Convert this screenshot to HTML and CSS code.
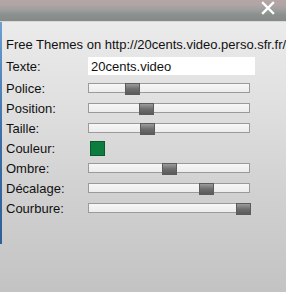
FILE: index.html
```html
<!DOCTYPE html>
<html>
<head>
  <title>Free Themes</title>
  <link rel="stylesheet" href="styles.css">
</head>
<body>
  <div class="titlebar">
    <svg class="close" width="14" height="14" viewBox="0 0 14 14">
      <path d="M2 2 L12 12 M12 2 L2 12" stroke="#fff" stroke-width="2.4" stroke-linecap="square"/>
    </svg>
  </div>
  <div class="panel">
    <div class="edge"></div>
    <div class="content">
      <div class="heading">Free Themes on http://20cents.video.perso.sfr.fr/</div>
      <div class="row row-text">
        <label>Texte:</label>
        <input class="text-input" type="text" value="20cents.video">
      </div>
      <div class="row">
        <label>Police:</label>
        <div class="track"><div class="thumb" style="left: 36px"></div></div>
      </div>
      <div class="row">
        <label>Position:</label>
        <div class="track"><div class="thumb" style="left: 50px"></div></div>
      </div>
      <div class="row">
        <label>Taille:</label>
        <div class="track"><div class="thumb" style="left: 51px"></div></div>
      </div>
      <div class="row">
        <label>Couleur:</label>
        <div class="swatch"></div>
      </div>
      <div class="row">
        <label>Ombre:</label>
        <div class="track"><div class="thumb" style="left: 73px"></div></div>
      </div>
      <div class="row">
        <label>Décalage:</label>
        <div class="track"><div class="thumb" style="left: 110px"></div></div>
      </div>
      <div class="row">
        <label>Courbure:</label>
        <div class="track"><div class="thumb" style="left: 147px"></div></div>
      </div>
    </div>
  </div>
</body>
</html>
```

FILE: styles.css
```css
html, body {
  margin: 0;
  height: 100%;
}

body {
  width: 286px;
  height: 292px;
  overflow: hidden;
  font-family: "Liberation Sans", Arial, sans-serif;
  font-size: 13px;
  color: #111;
  display: flex;
  flex-direction: column;
  background-color: #c4c4c4;
}

.titlebar {
  height: 22px;
  flex: none;
  display: flex;
  justify-content: flex-end;
  align-items: flex-start;
  padding-right: 11px;
  box-sizing: border-box;
  background: linear-gradient(to bottom, #b6a6a6 0%, #b0a4a4 25%, #9ea09f 45%, #8b908f 70%, #858a89 100%);
  border-bottom: 1px solid #d8d8d8;
}

.close {
  margin-top: 1px;
}

.panel {
  flex: 1;
  display: flex;
  position: relative;
  background: linear-gradient(to bottom, #ebebeb 0%, #e0e0e0 30%, #d2d2d2 60%, #c3c3c3 100%);
}

.edge {
  width: 2px;
  height: 222px;
  flex: none;
  background: linear-gradient(to bottom, #6f9fd0, #3b6fa6 50%, #2f5f96);
}

.content {
  padding: 13px 0 0 4px;
  flex: 1;
}

.heading {
  height: 20px;
  line-height: 20px;
  white-space: nowrap;
}

.row {
  display: flex;
  align-items: center;
  height: 20px;
}

.row-text {
  height: 22px;
  margin-bottom: 1px;
}

.row label {
  width: 82px;
  flex: none;
}

.text-input {
  width: 167px;
  height: 18px;
  box-sizing: border-box;
  border: none;
  background: #fff;
  font-family: "Liberation Sans", Arial, sans-serif;
  font-size: 13px;
  color: #111;
  padding: 0 3px;
  margin: 0;
  outline: none;
}

.track {
  position: relative;
  width: 162px;
  height: 10px;
  box-sizing: border-box;
  border: 1px solid #9a9a9a;
  background: linear-gradient(to bottom, #f7f7f7, #ececec);
}

.thumb {
  position: absolute;
  top: -1px;
  width: 15px;
  height: 12px;
  box-sizing: border-box;
  border: 1px solid #5c5c5c;
  background: linear-gradient(to bottom, #9c9c9c, #6e6e6e 50%, #5a5a5a);
}

.swatch {
  width: 15px;
  height: 15px;
  margin-left: 2px;
  box-sizing: border-box;
  border: 1px solid #0a5a2c;
  background: #0c7d3e;
}
```
